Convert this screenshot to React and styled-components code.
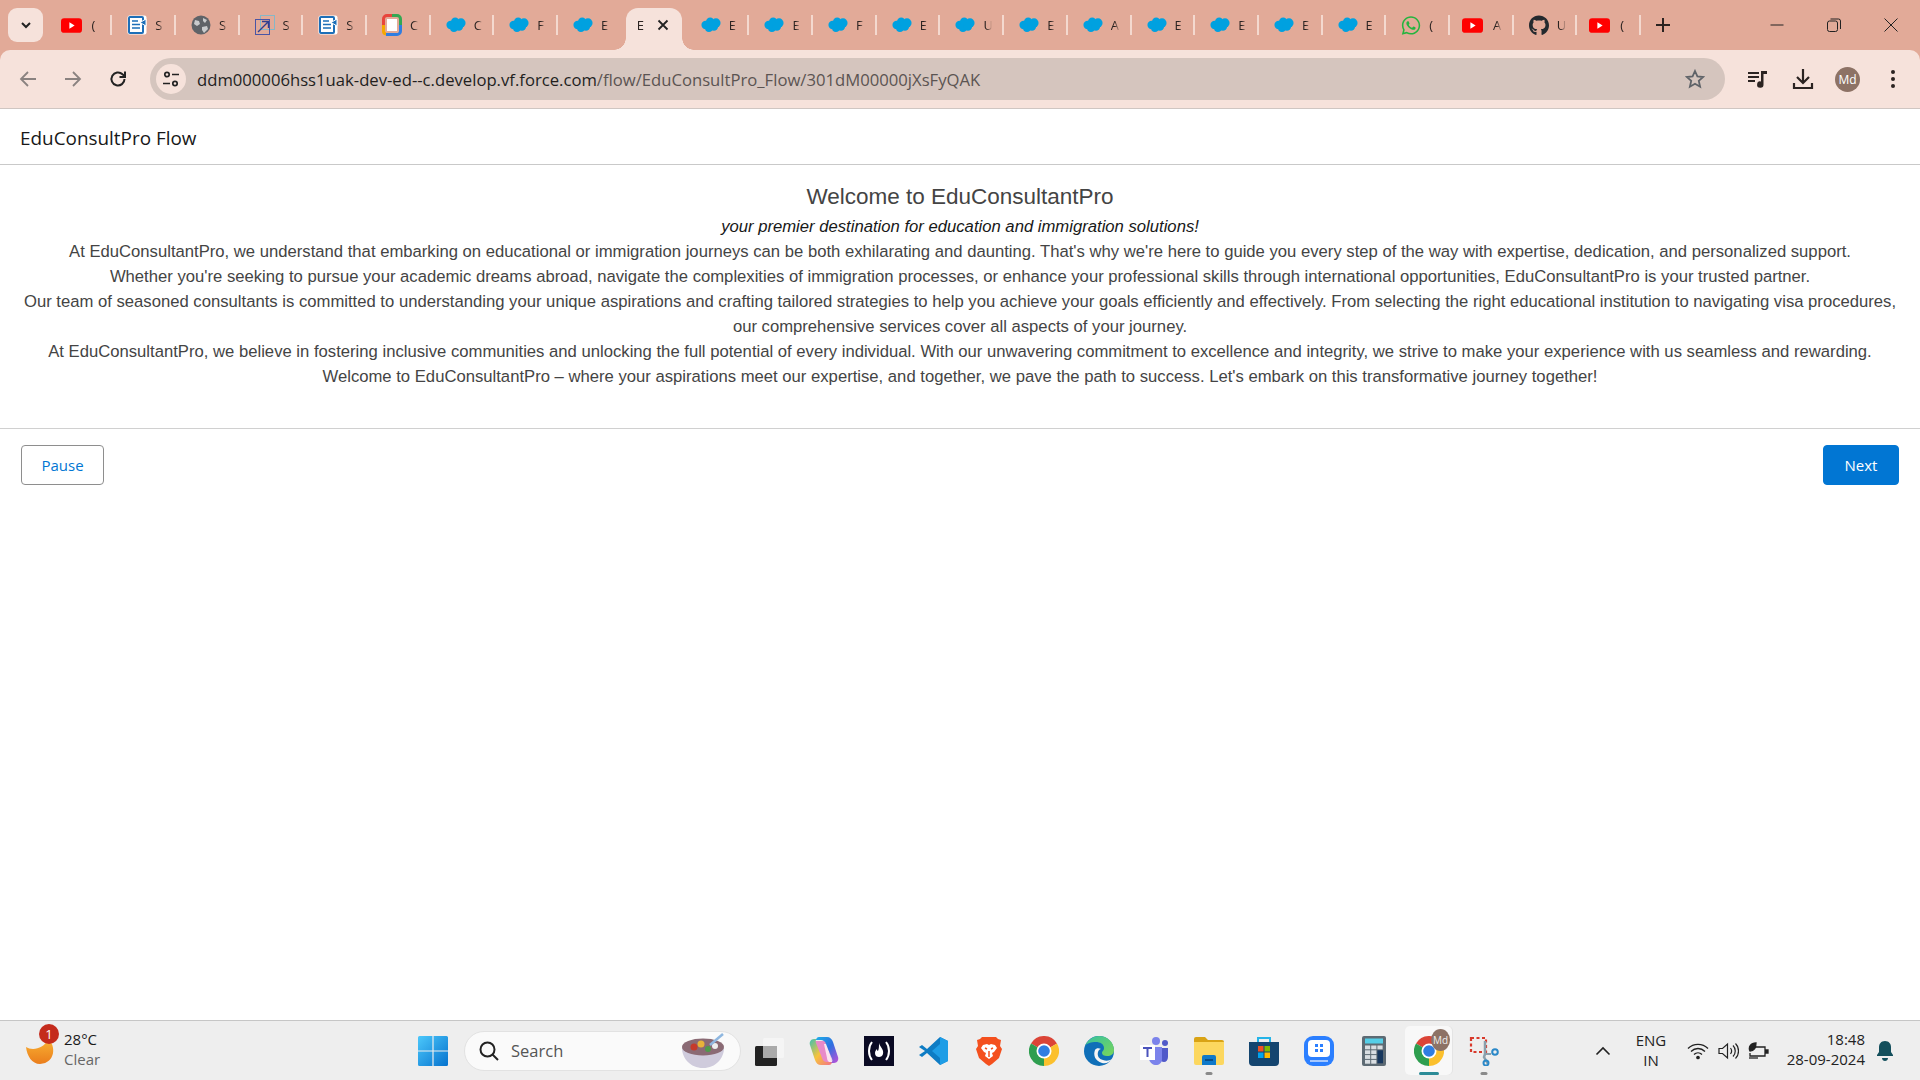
import React from 'react'
import styled, { createGlobalStyle } from 'styled-components'
import { FaGithub, FaWhatsapp } from 'react-icons/fa'

const GlobalStyle = createGlobalStyle`
    html, body {
        margin: 0;
        padding: 0;
        background: #fff;
    }
    * {
        box-sizing: border-box;
    }
`

const YtSvg = styled.svg`
    margin-left: -5px;
    flex: none;
`

const YouTube = () => (
    <YtSvg width="21" height="15" viewBox="0 0 20 14">
        <rect width="20" height="14" rx="3" fill="#f00" />
        <path d="M8 4l5 3-5 3z" fill="#fff" />
    </YtSvg>
)

const Doc = () => (
    <svg width="20" height="20" viewBox="0 0 20 20">
        <rect x="0.5" y="0.5" width="19" height="19" rx="2" fill="#fff" />
        <rect x="2" y="2" width="14" height="16" rx="1" fill="#fff" stroke="#1d6fb8" strokeWidth="2" />
        <path d="M5 6h6M5 9.5h8M5 13h8" stroke="#1d6fb8" strokeWidth="1.6" />
        <path d="M19 4l-6 3.5 6 3.5z" fill="#1d6fb8" stroke="#fff" />
    </svg>
)

const Globe = () => (
    <svg width="20" height="20" viewBox="0 0 20 20">
        <circle cx="10" cy="10" r="9.5" fill="#5f6368" />
        <path d="M4 5l4 1 1 3-3 2-3-2zM12 3l4 2-2 3-2-2zM11 12l5-1 1 3-4 4-2-3z" fill="#c9cbcd" />
    </svg>
)

const ArrowSquare = () => (
    <svg width="20" height="20" viewBox="0 0 20 20" fill="none">
        <rect x="5.5" y="0.5" width="14" height="14" stroke="#86b7c7" />
        <rect x="0.5" y="4.5" width="14" height="15" stroke="#4a55a5" />
        <path d="M3 17L13 7M7 6.5h6.5V13" stroke="#2f3f8f" strokeWidth="1.4" />
    </svg>
)

const Workspace = () => (
    <svg width="20" height="22" viewBox="0 0 20 22" fill="none">
        <path d="M4 20A3 3 0 0 1 1.500 17V11" stroke="#f5a800" strokeWidth="3" />
        <path d="M1.500 11V5A3.500 3.500 0 0 1 5 1.500H10" stroke="#e8453c" strokeWidth="3" />
        <path d="M10 1.500H15A3.500 3.500 0 0 1 18.500 5V11" stroke="#34a853" strokeWidth="3" />
        <path d="M18.500 11V17A3.500 3.500 0 0 1 15 20.500H4" stroke="#2f7de1" strokeWidth="3" />
        <rect x="5" y="5" width="10" height="12" fill="#fff" />
    </svg>
)

const Cloud = () => (
    <svg width="21" height="16" viewBox="0 0 24 18" fill="#00a1e0">
        <circle cx="5.500" cy="9" r="5" />
        <circle cx="11" cy="5" r="5" />
        <circle cx="18" cy="6.500" r="5.500" />
        <circle cx="9.500" cy="13" r="4.500" />
        <circle cx="15.500" cy="11" r="5" />
    </svg>
)

const tabs = [
    { icon: <YouTube />, text: '(' },
    { icon: <Doc />, text: 'S' },
    { icon: <Globe />, text: 'S' },
    { icon: <ArrowSquare />, text: 'S' },
    { icon: <Doc />, text: 'S' },
    { icon: <Workspace />, text: 'C' },
    { icon: <Cloud />, text: 'C' },
    { icon: <Cloud />, text: 'F' },
    { icon: <Cloud />, text: 'E' },
    { active: true, text: 'E' },
    { icon: <Cloud />, text: 'E' },
    { icon: <Cloud />, text: 'E' },
    { icon: <Cloud />, text: 'F' },
    { icon: <Cloud />, text: 'E' },
    { icon: <Cloud />, text: 'U' },
    { icon: <Cloud />, text: 'E' },
    { icon: <Cloud />, text: 'A' },
    { icon: <Cloud />, text: 'E' },
    { icon: <Cloud />, text: 'E' },
    { icon: <Cloud />, text: 'E' },
    { icon: <Cloud />, text: 'E' },
    { icon: <FaWhatsapp size={21} color="#25b43f" />, text: '(' },
    { icon: <YouTube />, text: 'A' },
    { icon: <FaGithub size={21} color="#24292e" />, text: 'U' },
    { icon: <YouTube />, text: '(' },
]

const Chrome = () => (
    <svg width="30" height="30" viewBox="0 0 32 32">
        <path d="M16 16L2.140 8A16 16 0 0 1 29.860 8Z" fill="#db4437" />
        <path d="M16 16L29.860 8A16 16 0 0 1 16 32Z" fill="#fbc02d" />
        <path d="M16 16L16 32A16 16 0 0 1 2.140 8Z" fill="#2e9e4f" />
        <circle cx="16" cy="16" r="8" fill="#fff" />
        <circle cx="16" cy="16" r="6.200" fill="#2f7de1" />
    </svg>
)

const TaskView = () => (
    <svg width="30" height="30" viewBox="0 0 30 30">
        <rect x="1" y="10" width="22" height="20" rx="1.500" fill="#222" />
        <rect x="9" y="2" width="21" height="20" rx="1.500" fill="#f5f5f5" />
        <rect x="9" y="10" width="14" height="12" fill="#aaa" />
    </svg>
)

const Copilot = () => (
    <svg width="30" height="30" viewBox="0 0 30 30">
        <defs>
            <linearGradient id="copA" x1="0" y1="0" x2="1" y2="1">
                <stop offset="0" stopColor="#1fb0e8" />
                <stop offset="0.5" stopColor="#2f6fe0" />
                <stop offset="1" stopColor="#c050d8" />
            </linearGradient>
            <linearGradient id="copB" x1="0" y1="0" x2="1" y2="1">
                <stop offset="0" stopColor="#3fc0b0" />
                <stop offset="0.5" stopColor="#f7c33c" />
                <stop offset="1" stopColor="#f2708a" />
            </linearGradient>
        </defs>
        <path d="M6 5h12l4 17c.5 2 1 4 3 4H12c-3 0-4-2-5-4L4 9z" fill="#e88ac8" />
        <path d="M15 8h3l4 14c.5 2 1 3 2 4h-4c-1-1-2-2-2-4z" fill="#fbe4ee" />
        <path d="M20 29H12c-3 0-5-2-6-5L1 9c-1-3 1-6 4-6h4c-2 0-3 2-2 4l6 15c1 3 3 4 5 4h5c0 1-1 3-3 3z" fill="url(#copB)" />
        <path d="M10 1H18c3 0 5 2 6 5l5 15c1 3-1 6-4 6h-4c2 0 3-2 2-4L17 8c-1-3-3-4-5-4H7c0-1 1-3 3-3z" fill="url(#copA)" />
    </svg>
)

const CodeCamp = () => (
    <svg width="30" height="30" viewBox="0 0 30 30">
        <rect width="30" height="30" fill="#0a0a23" />
        <path d="M8 6C4 11 4 19 8 24M22 6c4 5 4 13 0 18" stroke="#fff" strokeWidth="2" fill="none" />
        <path d="M15 7c1 4 5 6 4 11-.5 2-2 3-4 3s-4-1-4-4c0-2 1-3 2-4 0 1 .5 2 1 2 1-2 1-5 1-8z" fill="#fff" />
    </svg>
)

const VsCode = () => (
    <svg width="30" height="30" viewBox="0 0 30 30">
        <path d="M21 1l8 4v20l-8 4L8 17l-5 4-3-2 6-4-6-4 3-2 5 4z" fill="#0e7cc4" />
        <path d="M21 1l8 4v20l-8 4zM21 8l-8 7 8 7z" fill="#1e9de6" fillRule="evenodd" />
    </svg>
)

const Brave = () => (
    <svg width="26" height="30" viewBox="0 0 26 30">
        <path d="M6 1h14l2 2 3 1-1 6 2 3-3 9-7 6-3 2-3-2-7-6-3-9 2-3-1-6 3-1z" fill="#f4501e" />
        <path d="M7 9l4-1 2 1 2-1 4 1 2 3-3 4-2 1 1 3-4 3-4-3 1-3-2-1-3-4z" fill="#fff" />
        <path d="M9 12l2 1M17 12l-2 1M13 15v6" stroke="#f4501e" strokeWidth="1.500" />
    </svg>
)

const Edge = () => (
    <svg width="30" height="30" viewBox="0 0 30 30">
        <defs>
            <linearGradient id="edgeA" x1="0" y1="0" x2="1" y2="1">
                <stop offset="0" stopColor="#35c1a0" />
                <stop offset="1" stopColor="#7ad65a" />
            </linearGradient>
        </defs>
        <circle cx="15" cy="15" r="15" fill="#0f6fb8" />
        <path d="M1 10C4 3 10 0 15 0c8 0 15 6 15 14 0 4-3 6-7 6-3 0-5-1-5-3 0-2 2-2 2-5 0-4-4-6-8-6-5 0-9 1-11 4z" fill="url(#edgeA)" />
        <path d="M11 14c-2 5 0 11 7 13 4 1 8-1 10-4-3 2-6 2-9 1-4-1-6-4-5-8 .5-2 2-3 3-3-2-1-5-1-6 1z" fill="#f4f4f4" />
    </svg>
)

const Teams = () => (
    <svg width="30" height="30" viewBox="0 0 30 30">
        <circle cx="17" cy="5" r="4" fill="#7b83eb" />
        <circle cx="26" cy="7" r="3" fill="#5059c9" />
        <path d="M21 12h8v9c0 3-2 5-4 5-2 0-4-1-4-3z" fill="#5059c9" />
        <path d="M10 11h13v12c0 4-3 6-6 6s-6-2-7-6z" fill="#7b83eb" />
        <rect x="1" y="9" width="15" height="15" fill="#fff" />
        <path d="M4 12h9M8.500 12v9" stroke="#4b53bc" strokeWidth="2" />
    </svg>
)

const Explorer = () => (
    <svg width="30" height="30" viewBox="0 0 30 30">
        <path d="M0 3a2 2 0 0 1 2-2h9l3 3h14a2 2 0 0 1 2 2v6H0z" fill="#d9a315" />
        <path d="M0 6h30v21a2 2 0 0 1-2 2H2a2 2 0 0 1-2-2z" fill="#fcd75f" />
        <path d="M8 21a2 2 0 0 1 2-2h10a2 2 0 0 1 2 2v8H8z" fill="#0f79c9" />
        <path d="M11 24h8" stroke="#063f73" strokeWidth="1.500" />
    </svg>
)

const Store = () => (
    <svg width="30" height="30" viewBox="0 0 30 30">
        <path d="M9 6V2h12v4" fill="none" stroke="#25b4e8" strokeWidth="2" />
        <path d="M0 6h30v20a4 4 0 0 1-4 4H4a4 4 0 0 1-4-4z" fill="#14456f" />
        <rect x="9" y="10" width="5.500" height="5.500" fill="#f25022" />
        <rect x="15.500" y="10" width="5.500" height="5.500" fill="#7fba00" />
        <rect x="9" y="16.500" width="5.500" height="5.500" fill="#00a4ef" />
        <rect x="15.500" y="16.500" width="5.500" height="5.500" fill="#ffb900" />
    </svg>
)

const Meet = () => (
    <svg width="30" height="30" viewBox="0 0 30 30">
        <rect width="30" height="30" rx="9" fill="#2b7fff" />
        <rect x="4" y="4" width="22" height="17" rx="4" fill="#fff" />
        <rect x="11" y="8" width="3" height="3" fill="#2b7fff" />
        <rect x="16" y="8" width="3" height="3" fill="#2b7fff" />
        <rect x="11" y="13" width="3" height="3" fill="#2b7fff" />
        <rect x="16" y="13" width="3" height="3" fill="#2b7fff" />
        <path d="M6 25h18" stroke="#cfe0ff" strokeWidth="1.500" />
    </svg>
)

const Calculator = () => (
    <svg width="24" height="30" viewBox="0 0 24 30">
        <rect width="24" height="30" rx="2" fill="#5d6a73" />
        <rect x="3" y="2.500" width="18" height="5" fill="#55cfe8" />
        {[0, 1, 2, 3].map((r) =>
            [0, 1, 2].map((c) =>
                c === 2 && r > 0 ? null : (
                    <rect key={`${r}${c}`} x={3 + c * 6.200} y={9.500 + r * 4.800} width="5.200" height="3.800" fill="#d9dee2" />
                )
            )
        )}
        <rect x="15.400" y="14.300" width="5.600" height="13" fill="#17375e" />
    </svg>
)

const Snip = () => (
    <svg width="30" height="30" viewBox="0 0 30 30" fill="none">
        <rect x="2" y="2" width="15" height="14" stroke="#d8392b" strokeWidth="2.200" strokeDasharray="3 2.500" />
        <path d="M16 5v13l-1 3 4 7" stroke="#8aa0ac" strokeWidth="2.500" />
        <path d="M17 18h5" stroke="#8aa0ac" strokeWidth="2" />
        <circle cx="26" cy="16" r="2.800" stroke="#2a88c8" strokeWidth="2" />
        <circle cx="17" cy="27" r="2.500" stroke="#2a88c8" strokeWidth="2" />
    </svg>
)

const Bowl = () => (
    <svg width="46" height="36" viewBox="0 0 46 36">
        <path d="M2 15c0 10 8 20 21 20s21-10 21-20z" fill="#cfcbdc" />
        <ellipse cx="23" cy="14" rx="21" ry="8.500" fill="#8a6a74" />
        <circle cx="14" cy="14" r="3.500" fill="#c63a2c" />
        <circle cx="21" cy="11" r="3.500" fill="#e8b23a" />
        <circle cx="28" cy="16" r="3" fill="#4f9a4b" />
        <circle cx="35" cy="13" r="3" fill="#eee" />
        <path d="M30 12L43 1" stroke="#8fb7e0" strokeWidth="2.500" />
    </svg>
)

const taskIcons = [
    { icon: <TaskView /> },
    { icon: <Copilot /> },
    { icon: <CodeCamp /> },
    { icon: <VsCode /> },
    { icon: <Brave /> },
    { icon: <Chrome /> },
    { icon: <Edge /> },
    { icon: <Teams /> },
    { icon: <Explorer />, running: true },
    { icon: <Store /> },
    { icon: <Meet /> },
    { icon: <Calculator /> },
    { icon: <Chrome />, active: true },
    { icon: <Snip />, running: true },
]

const App = () => {
    return (
        <Ventana>
            <GlobalStyle />
            <Navegador>
                <TabStrip>
                    <ListaTabs>
                        <svg width="14" height="14" viewBox="0 0 14 14" fill="none">
                            <path d="M3 5l4 4 4-4" stroke="#222" strokeWidth="2" />
                        </svg>
                    </ListaTabs>
                    <Tabs>
                        {tabs.map((tab, index) => (
                            <Tab key={index} $active={tab.active} $sinLinea={tabs[index + 1]?.active}>
                                {tab.icon && <TabIcon>{tab.icon}</TabIcon>}
                                <TabTexto $active={tab.active}>{tab.text}</TabTexto>
                                {tab.active && (
                                    <svg width="12" height="12" viewBox="0 0 12 12" fill="none">
                                        <path d="M1.500 1.500l9 9M10.500 1.500l-9 9" stroke="#222" strokeWidth="1.800" />
                                    </svg>
                                )}
                            </Tab>
                        ))}
                    </Tabs>
                    <NuevaTab>
                        <svg width="16" height="16" viewBox="0 0 16 16" fill="none">
                            <path d="M8 1v14M1 8h14" stroke="#2b2321" strokeWidth="2" />
                        </svg>
                    </NuevaTab>
                    <ControlesVentana>
                        <Control>
                            <svg width="14" height="14" viewBox="0 0 14 14" fill="none" stroke="#222" strokeWidth="1">
                                <path d="M0.500 7h13" />
                            </svg>
                        </Control>
                        <Control>
                            <svg width="14" height="14" viewBox="0 0 14 14" fill="none" stroke="#222" strokeWidth="1">
                                <rect x="0.500" y="3" width="10" height="10.500" rx="2" />
                                <path d="M3.500 1h8a2 2 0 0 1 2 2v8" />
                            </svg>
                        </Control>
                        <Control>
                            <svg width="14" height="14" viewBox="0 0 14 14" fill="none" stroke="#222" strokeWidth="1">
                                <path d="M0.500 0.500l13 13M13.500 0.500l-13 13" />
                            </svg>
                        </Control>
                    </ControlesVentana>
                </TabStrip>

                <Toolbar>
                    <NavBoton>
                        <svg width="18" height="18" viewBox="0 0 18 18" fill="none" stroke="#8a8280" strokeWidth="1.800">
                            <path d="M17 9H2M9 2L2 9l7 7" />
                        </svg>
                    </NavBoton>
                    <NavBoton>
                        <svg width="18" height="18" viewBox="0 0 18 18" fill="none" stroke="#8a8280" strokeWidth="1.800">
                            <path d="M1 9h15M9 2l7 7-7 7" />
                        </svg>
                    </NavBoton>
                    <NavBoton>
                        <svg width="18" height="18" viewBox="0 0 18 18" fill="none" stroke="#222" strokeWidth="2">
                            <path d="M15.500 9a6.500 6.500 0 1 1-2-4.700L16 6.500" />
                            <path d="M16 1.500v5.500h-5.500" />
                        </svg>
                    </NavBoton>
                    <Omnibox>
                        <SiteInfo>
                            <svg width="18" height="18" viewBox="0 0 18 18" fill="none" stroke="#222" strokeWidth="1.700">
                                <circle cx="5" cy="4.500" r="2.200" />
                                <path d="M10 4.500h7M1 13.500h7" />
                                <circle cx="13" cy="13.500" r="2.200" />
                            </svg>
                        </SiteInfo>
                        <Url>
                            ddm000006hss1uak-dev-ed--c.develop.vf.force.com
                            <UrlRuta>/flow/EduConsultPro_Flow/301dM00000jXsFyQAK</UrlRuta>
                        </Url>
                        <Estrella>
                            <svg width="20" height="20" viewBox="0 0 20 20" fill="none" stroke="#5f6368" strokeWidth="1.800">
                                <path d="M10 2l2.400 5.400 5.800.6-4.400 3.900 1.300 5.800L10 14.700 4.900 17.700l1.300-5.800L1.800 8l5.800-.6z" />
                            </svg>
                        </Estrella>
                    </Omnibox>
                    <Acciones>
                        <Accion>
                            <svg width="22" height="22" viewBox="0 0 22 22" fill="#2b2321">
                                <path d="M1 4h11v2H1zM1 8h11v2H1zM1 12h7v2H1z" />
                                <path d="M14 3h6v3h-3.500v10.500a3.200 3.200 0 1 1-2.500-3z" />
                            </svg>
                        </Accion>
                        <Accion>
                            <svg width="22" height="22" viewBox="0 0 22 22" fill="none" stroke="#2b2321" strokeWidth="2.200">
                                <path d="M11 1v13M5 9l6 6 6-6M2 15v5h18v-5" />
                            </svg>
                        </Accion>
                        <Avatar>Md</Avatar>
                        <Accion>
                            <svg width="6" height="20" viewBox="0 0 6 20" fill="#2b2321">
                                <circle cx="3" cy="3" r="2" />
                                <circle cx="3" cy="10" r="2" />
                                <circle cx="3" cy="17" r="2" />
                            </svg>
                        </Accion>
                    </Acciones>
                </Toolbar>
            </Navegador>

            <Pagina>
                <Cabecera>EduConsultPro Flow</Cabecera>
                <Contenido>
                    <Titulo>Welcome to EduConsultantPro</Titulo>
                    <Subtitulo>your premier destination for education and immigration solutions!</Subtitulo>
                    <Parrafo>At EduConsultantPro, we understand that embarking on educational or immigration journeys can be both exhilarating and daunting. That's why we're here to guide you every step of the way with expertise, dedication, and personalized support.</Parrafo>
                    <Parrafo>Whether you're seeking to pursue your academic dreams abroad, navigate the complexities of immigration processes, or enhance your professional skills through international opportunities, EduConsultantPro is your trusted partner.</Parrafo>
                    <Parrafo>Our team of seasoned consultants is committed to understanding your unique aspirations and crafting tailored strategies to help you achieve your goals efficiently and effectively. From selecting the right educational institution to navigating visa procedures, our comprehensive services cover all aspects of your journey.</Parrafo>
                    <Parrafo>At EduConsultantPro, we believe in fostering inclusive communities and unlocking the full potential of every individual. With our unwavering commitment to excellence and integrity, we strive to make your experience with us seamless and rewarding.</Parrafo>
                    <Parrafo>Welcome to EduConsultantPro – where your aspirations meet our expertise, and together, we pave the path to success. Let's embark on this transformative journey together!</Parrafo>
                </Contenido>
                <Pie>
                    <Boton>Pause</Boton>
                    <Boton $primario>Next</Boton>
                </Pie>
            </Pagina>

            <Taskbar>
                <Clima>
                    <Luna>
                        <svg width="30" height="28" viewBox="0 0 30 28">
                            <defs>
                                <linearGradient id="lunaG" x1="0" y1="0" x2="0" y2="1">
                                    <stop offset="0" stopColor="#f9b233" />
                                    <stop offset="1" stopColor="#ea7d1c" />
                                </linearGradient>
                            </defs>
                            <path d="M0 10C6 14 18 12 22 2c8 6 8 24-8 25C6 27 1 19 0 10z" fill="url(#lunaG)" />
                        </svg>
                        <Badge>1</Badge>
                    </Luna>
                    <ClimaTexto>
                        <span>28°C</span>
                        <ClimaEstado>Clear</ClimaEstado>
                    </ClimaTexto>
                </Clima>
                <TaskSlot>
                    <svg width="30" height="30" viewBox="0 0 30 30">
                        <defs>
                            <linearGradient id="winG" x1="0" y1="0" x2="1" y2="1">
                                <stop offset="0" stopColor="#4cc8fb" />
                                <stop offset="1" stopColor="#0572ce" />
                            </linearGradient>
                        </defs>
                        <path d="M0 1.500A1.500 1.500 0 0 1 1.500 0H14.400V14.400H0zM15.600 0H28.500A1.500 1.500 0 0 1 30 1.500V14.400H15.600zM0 15.600H14.400V30H1.500A1.500 1.500 0 0 1 0 28.500zM15.600 15.600H30V28.500A1.500 1.500 0 0 1 28.500 30H15.600z" fill="url(#winG)" />
                    </svg>
                </TaskSlot>
                <Buscador>
                    <svg width="20" height="20" viewBox="0 0 20 20" fill="none" stroke="#222" strokeWidth="2">
                        <circle cx="8.500" cy="8.500" r="7" />
                        <path d="M13.500 13.500L19 19" />
                    </svg>
                    <BuscadorTexto>Search</BuscadorTexto>
                    <Bowl />
                </Buscador>
                {taskIcons.map((item, index) => (
                    <TaskSlot key={index}>
                        {item.active && <TaskActivo />}
                        <TaskIcono>{item.icon}</TaskIcono>
                        {item.active && <AvatarMini>Md</AvatarMini>}
                        {item.running && <Indicador />}
                        {item.active && <Indicador $activo />}
                    </TaskSlot>
                ))}
                <Bandeja>
                    <BandejaSlot $ancho={30}>
                        <svg width="16" height="10" viewBox="0 0 16 10" fill="none" stroke="#222" strokeWidth="1.600">
                            <path d="M1.500 8.500L8 2l6.500 6.500" />
                        </svg>
                    </BandejaSlot>
                    <Idioma>
                        <span>ENG</span>
                        <span>IN</span>
                    </Idioma>
                    <BandejaSlot $ancho={30}>
                        <svg width="22" height="18" viewBox="0 0 22 18" fill="none" stroke="#222" strokeWidth="1.300">
                            <path d="M1 6.500C6.500 1 15.500 1 21 6.500M4 9.500c4-4 10-4 14 0M7 12.500c2.300-2.300 5.700-2.300 8 0" />
                            <circle cx="11" cy="15.500" r="1.200" fill="#222" />
                        </svg>
                    </BandejaSlot>
                    <BandejaSlot $ancho={30}>
                        <svg width="21" height="18" viewBox="0 0 21 18" fill="none" stroke="#222" strokeWidth="1.200">
                            <path d="M1 6.500h3.500L9.500 2v14l-5-4.500H1z" />
                            <path d="M12.500 6c1.500 2 1.500 4 0 6M15 3.500c3 3 3 8 0 11M17.500 1.500c4 4 4 11 0 15" />
                        </svg>
                    </BandejaSlot>
                    <BandejaSlot $ancho={30}>
                        <svg width="21" height="18" viewBox="0 0 21 18" fill="none" stroke="#222" strokeWidth="1.300">
                            <path d="M7 5h10v9H2v-3" />
                            <path d="M17 8h3v3h-3" fill="#222" />
                            <path d="M2 9C0 5 3 1 8 1c0 4-1 8-6 8z" fill="#222" />
                            <path d="M1 16h9" />
                        </svg>
                    </BandejaSlot>
                    <Reloj>
                        <span>18:48</span>
                        <span>28-09-2024</span>
                    </Reloj>
                    <BandejaSlot $ancho={28}>
                        <svg width="18" height="20" viewBox="0 0 18 20" fill="#134f5c">
                            <path d="M9 0c-4 0-6 3-6 6v5l-2 3v1h16v-1l-2-3V6c0-3-2-6-6-6z" />
                            <path d="M6 17h6c0 2-1.500 3-3 3s-3-1-3-3z" />
                        </svg>
                    </BandejaSlot>
                </Bandeja>
            </Taskbar>
        </Ventana>
    )
}

const Ventana = styled.div`
    width: 1920px;
    height: 1080px;
    display: flex;
    flex-direction: column;
    overflow: hidden;
    background: #fff;
`
const Navegador = styled.div`
    flex: none;
    background: #e2aa98;
`
const TabStrip = styled.div`
    height: 50px;
    display: flex;
    align-items: flex-end;
    padding-left: 8px;
`
const ListaTabs = styled.div`
    width: 35px;
    height: 34px;
    margin-bottom: 8px;
    margin-right: 5.5px;
    border-radius: 9px;
    background: #f6e2db;
    display: flex;
    align-items: center;
    justify-content: center;
`
const Tabs = styled.div`
    display: flex;
    align-items: flex-end;
`
const Tab = styled.div`
    position: relative;
    width: 63.7px;
    height: 42px;
    padding-left: 15px;
    padding-bottom: 8px;
    display: flex;
    align-items: center;
    flex: none;

    &:after {
        content: '';
        display: ${(props) => (props.$sinLinea ? 'none' : 'block')};
        position: absolute;
        right: 0;
        top: 7px;
        width: 2px;
        height: 20px;
        background: #f4d9cf;
    }

    ${(props) => props.$active && `
        width: 56px;
        margin: 0 4px;
        padding-left: 11px;
        background: #f6e2db;
        border-radius: 12px 12px 0 0;

        &:before, &:after {
            content: '';
            display: block;
            position: absolute;
            top: auto;
            bottom: 0;
            width: 12px;
            height: 12px;
        }
        &:before {
            left: -12px;
            background: radial-gradient(circle at 0 0, transparent 11.5px, #f6e2db 12px);
        }
        &:after {
            right: -12px;
            background: radial-gradient(circle at 100% 0, transparent 11.5px, #f6e2db 12px);
        }
    `}
`
const TabIcon = styled.div`
    width: 20px;
    height: 22px;
    flex: none;
    display: flex;
    align-items: center;
    justify-content: center;
`
const TabTexto = styled.div`
    font-family: "Open Sans", sans-serif;
    font-size: 13px;
    color: #2b2321;
    width: ${(props) => (props.$active ? '15px' : '9px')};
    margin-left: ${(props) => (props.$active ? '0' : '8px')};
    margin-right: ${(props) => (props.$active ? '5px' : '0')};
    overflow: hidden;
    flex: none;
    -webkit-mask-image: linear-gradient(to right, #000 40%, transparent);
`
const NuevaTab = styled.div`
    width: 44px;
    height: 50px;
    display: flex;
    align-items: center;
    justify-content: center;
`
const ControlesVentana = styled.div`
    margin-left: auto;
    height: 50px;
    display: flex;
    align-items: center;
    padding-right: 1px;
`
const Control = styled.div`
    width: 57px;
    display: flex;
    justify-content: center;
`
const Toolbar = styled.div`
    height: 59px;
    display: flex;
    align-items: center;
    background: #f6e2db;
    border-bottom: 1px solid #cfc6c2;
    border-radius: 10px 10px 0 0;
    padding-left: 5px;
`
const NavBoton = styled.div`
    width: 45px;
    height: 40px;
    display: flex;
    align-items: center;
    justify-content: center;
`
const Omnibox = styled.div`
    width: 1575px;
    height: 42px;
    margin-left: 10px;
    padding: 0 4px 0 6px;
    display: flex;
    align-items: center;
    background: #d5c5be;
    border-radius: 21px;
`
const SiteInfo = styled.div`
    width: 30px;
    height: 30px;
    flex: none;
    border-radius: 50%;
    background: #f6e2db;
    display: flex;
    align-items: center;
    justify-content: center;
`
const Url = styled.div`
    margin-left: 11px;
    font-family: "Open Sans", sans-serif;
    font-size: 16.67px;
    color: #231f1e;
    white-space: nowrap;
`
const UrlRuta = styled.span`
    color: #5b5452;
`
const Estrella = styled.div`
    margin-left: auto;
    margin-right: 16px;
    display: flex;
`
const Acciones = styled.div`
    flex: 1;
    display: flex;
    align-items: center;
    padding-left: 10px;
`
const Accion = styled.div`
    width: 45px;
    display: flex;
    justify-content: center;
`
const Avatar = styled.div`
    width: 25px;
    height: 25px;
    margin: 0 10px;
    border-radius: 50%;
    background: #8d7265;
    color: #fff;
    font-family: "Open Sans", sans-serif;
    font-size: 12px;
    display: flex;
    align-items: center;
    justify-content: center;
`
const Pagina = styled.div`
    flex: 1;
    min-height: 0;
    font-family: "Liberation Sans", Arial, sans-serif;
`
const Cabecera = styled.div`
    height: 56px;
    padding: 2px 20px 0;
    display: flex;
    align-items: center;
    border-bottom: 1px solid #c9c9c9;
    font-family: "Open Sans", sans-serif;
    font-size: 18.9px;
    color: #181818;
`
const Contenido = styled.div`
    padding: 14px 20px 39px;
    border-bottom: 1px solid #d0d0d0;
    text-align: center;
    color: #444;
    font-size: 16.67px;
    line-height: 25px;
`
const Titulo = styled.div`
    font-size: 22.5px;
    line-height: 35px;
`
const Subtitulo = styled.div`
    font-style: italic;
    color: #181818;
`
const Parrafo = styled.div``
const Pie = styled.div`
    padding: 16px 21px;
    display: flex;
    justify-content: space-between;
`
const Boton = styled.button`
    height: 40px;
    width: ${(props) => (props.$primario ? '76px' : '83px')};
    padding: 0;
    border-radius: 4px;
    border: 1px solid ${(props) => (props.$primario ? '#0176d3' : '#8e8e8e')};
    background: ${(props) => (props.$primario ? '#0176d3' : '#fff')};
    color: ${(props) => (props.$primario ? '#fff' : '#0176d3')};
    font-family: "Open Sans", sans-serif;
    font-size: 15px;
`
const Taskbar = styled.div`
    height: 60px;
    flex: none;
    display: flex;
    align-items: center;
    background: #eeeeee;
    border-top: 1px solid #c6c6c6;
`
const Clima = styled.div`
    width: 405px;
    height: 100%;
    flex: none;
    padding-left: 26px;
    display: flex;
    align-items: center;
    gap: 8px;
`
const Luna = styled.div`
    position: relative;
    width: 30px;
    height: 28px;
`
const Badge = styled.div`
    position: absolute;
    top: -13px;
    left: 13px;
    width: 20px;
    height: 20px;
    border-radius: 50%;
    background: #c42b1c;
    color: #fff;
    font-family: "Open Sans", sans-serif;
    font-size: 13px;
    display: flex;
    align-items: center;
    justify-content: center;
`
const ClimaTexto = styled.div`
    display: flex;
    flex-direction: column;
    font-family: "Open Sans", sans-serif;
    font-size: 15px;
    line-height: 20px;
    color: #1a1a1a;
    margin-top: -3px;
`
const ClimaEstado = styled.span`
    color: #666;
`
const TaskSlot = styled.div`
    position: relative;
    width: 55px;
    height: 100%;
    flex: none;
    display: flex;
    align-items: center;
    justify-content: center;
`
const TaskIcono = styled.div`
    position: relative;
    display: flex;
`
const TaskActivo = styled.div`
    position: absolute;
    top: 5px;
    left: 4px;
    width: 47px;
    height: 49px;
    background: #f8f8f8;
    border-radius: 5px;
    box-shadow: 1px 0 0 #e4e4e4;
`
const AvatarMini = styled.div`
    position: absolute;
    top: 8px;
    left: 30px;
    width: 19px;
    height: 22px;
    border-radius: 50%;
    background: #8d7265;
    color: #eee;
    font-family: "Open Sans", sans-serif;
    font-size: 10px;
    display: flex;
    align-items: center;
    justify-content: center;
`
const Indicador = styled.div`
    position: absolute;
    bottom: 5px;
    left: 50%;
    transform: translateX(-50%);
    width: ${(props) => (props.$activo ? '20px' : '7px')};
    height: 3px;
    border-radius: 2px;
    background: ${(props) => (props.$activo ? '#2c8b97' : '#8a8a8a')};
`
const Buscador = styled.div`
    width: 277px;
    height: 40px;
    margin-left: 4px;
    padding: 0 14px 0 14px;
    flex: none;
    display: flex;
    align-items: center;
    background: #fafafa;
    border: 1px solid #e2e2e2;
    border-radius: 20px;
`
const BuscadorTexto = styled.span`
    margin-left: 12px;
    margin-right: auto;
    font-family: "Open Sans", sans-serif;
    font-size: 16.5px;
    color: #555;
`
const Bandeja = styled.div`
    margin-left: auto;
    height: 100%;
    padding-right: 21px;
    display: flex;
    align-items: center;
`
const BandejaSlot = styled.div`
    width: ${(props) => props.$ancho}px;
    display: flex;
    justify-content: center;
`
const Idioma = styled.div`
    width: 50px;
    margin: -1px 7px 0 8px;
    display: flex;
    flex-direction: column;
    align-items: center;
    font-family: "Open Sans", sans-serif;
    font-size: 15px;
    line-height: 20px;
    color: #222;
`
const Reloj = styled.div`
    width: 92px;
    margin: -4px 6px 0 0;
    display: flex;
    flex-direction: column;
    align-items: flex-end;
    font-family: "Open Sans", sans-serif;
    font-size: 15px;
    line-height: 20px;
    color: #222;
`

export default App
